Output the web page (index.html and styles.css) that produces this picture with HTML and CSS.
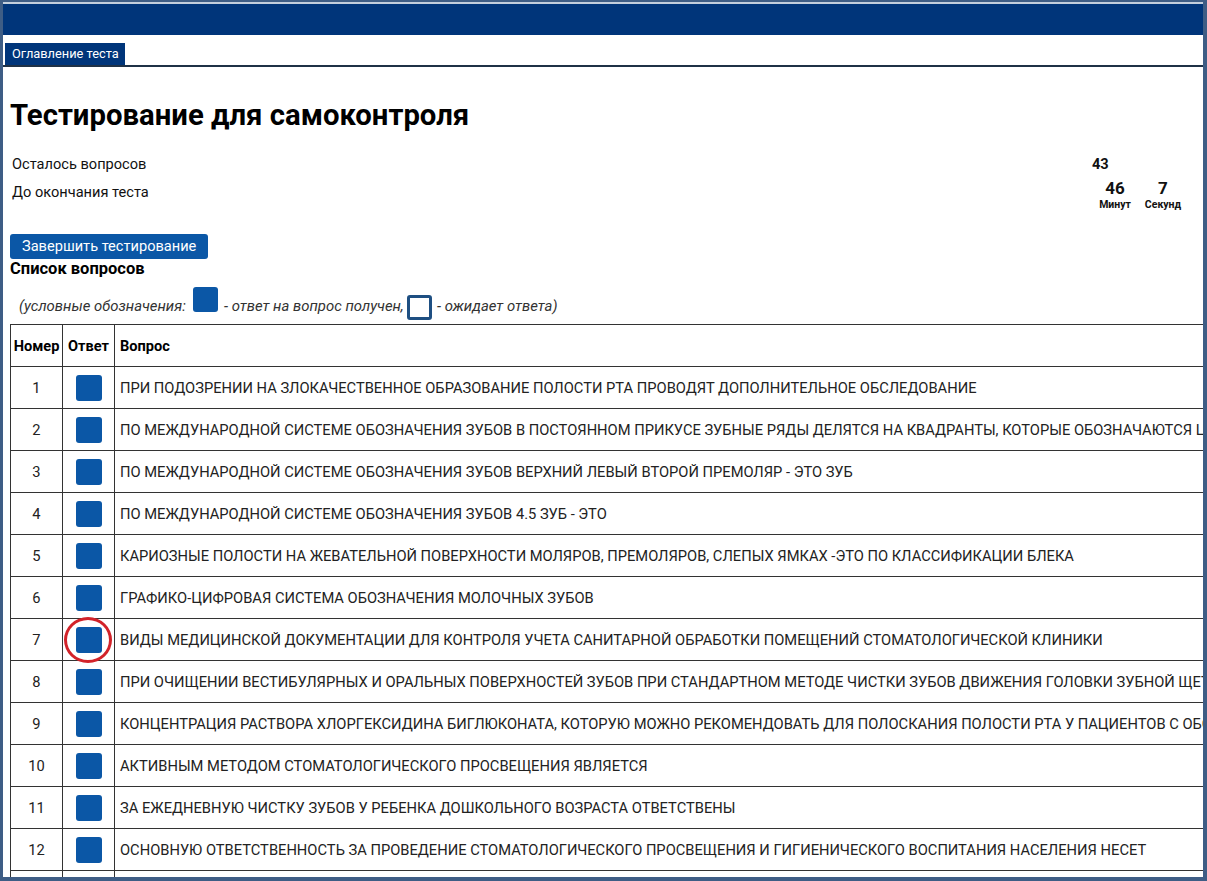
FILE: index.html
```html
<!DOCTYPE html>
<html lang="ru">
<head>
<meta charset="utf-8">
<title>Тестирование для самоконтроля</title>
<link rel="stylesheet" href="styles.css">
</head>
<body>
<div class="frame">
  <div class="topbar"></div>
  <div class="tabs">
    <span class="tab">Оглавление теста</span>
  </div>
  <div class="content">
    <h1 class="title">Тестирование для самоконтроля</h1>
    <div class="info">
      <div class="info-label">Осталось вопросов</div>
      <div class="info-value"><b>43</b></div>
      <div class="info-label">До окончания теста</div>
      <div class="timer">
        <div class="unit"><span class="num">46</span><span class="cap">Минут</span></div>
        <div class="unit"><span class="num">7</span><span class="cap">Секунд</span></div>
      </div>
    </div>
    <button class="finish">Завершить тестирование</button>
    <div class="list-title">Список вопросов</div>
    <div class="legend">(условные обозначения: <span class="sq sq-filled"></span> - ответ на вопрос получен, <span class="sq sq-empty"></span> - ожидает ответа)</div>
    <table class="questions">
      <thead>
        <tr><th class="c-num">Номер</th><th class="c-ans">Ответ</th><th class="c-q">Вопрос</th></tr>
      </thead>
      <tbody>
        <tr><td class="c-num">1</td><td class="c-ans"><span class="mark"></span></td><td class="c-q">ПРИ ПОДОЗРЕНИИ НА ЗЛОКАЧЕСТВЕННОЕ ОБРАЗОВАНИЕ ПОЛОСТИ РТА ПРОВОДЯТ ДОПОЛНИТЕЛЬНОЕ ОБСЛЕДОВАНИЕ</td></tr>
        <tr><td class="c-num">2</td><td class="c-ans"><span class="mark"></span></td><td class="c-q">ПО МЕЖДУНАРОДНОЙ СИСТЕМЕ ОБОЗНАЧЕНИЯ ЗУБОВ В ПОСТОЯННОМ ПРИКУСЕ ЗУБНЫЕ РЯДЫ ДЕЛЯТСЯ НА КВАДРАНТЫ, КОТОРЫЕ ОБОЗНАЧАЮТСЯ ЦИФРАМИ</td></tr>
        <tr><td class="c-num">3</td><td class="c-ans"><span class="mark"></span></td><td class="c-q">ПО МЕЖДУНАРОДНОЙ СИСТЕМЕ ОБОЗНАЧЕНИЯ ЗУБОВ ВЕРХНИЙ ЛЕВЫЙ ВТОРОЙ ПРЕМОЛЯР - ЭТО ЗУБ</td></tr>
        <tr><td class="c-num">4</td><td class="c-ans"><span class="mark"></span></td><td class="c-q">ПО МЕЖДУНАРОДНОЙ СИСТЕМЕ ОБОЗНАЧЕНИЯ ЗУБОВ 4.5 ЗУБ - ЭТО</td></tr>
        <tr><td class="c-num">5</td><td class="c-ans"><span class="mark"></span></td><td class="c-q">КАРИОЗНЫЕ ПОЛОСТИ НА ЖЕВАТЕЛЬНОЙ ПОВЕРХНОСТИ МОЛЯРОВ, ПРЕМОЛЯРОВ, СЛЕПЫХ ЯМКАХ -ЭТО ПО КЛАССИФИКАЦИИ БЛЕКА</td></tr>
        <tr><td class="c-num">6</td><td class="c-ans"><span class="mark"></span></td><td class="c-q">ГРАФИКО-ЦИФРОВАЯ СИСТЕМА ОБОЗНАЧЕНИЯ МОЛОЧНЫХ ЗУБОВ</td></tr>
        <tr><td class="c-num">7</td><td class="c-ans"><span class="mark-wrap"><span class="mark"></span><span class="ring"></span></span></td><td class="c-q">ВИДЫ МЕДИЦИНСКОЙ ДОКУМЕНТАЦИИ ДЛЯ КОНТРОЛЯ УЧЕТА САНИТАРНОЙ ОБРАБОТКИ ПОМЕЩЕНИЙ СТОМАТОЛОГИЧЕСКОЙ КЛИНИКИ</td></tr>
        <tr><td class="c-num">8</td><td class="c-ans"><span class="mark"></span></td><td class="c-q">ПРИ ОЧИЩЕНИИ ВЕСТИБУЛЯРНЫХ И ОРАЛЬНЫХ ПОВЕРХНОСТЕЙ ЗУБОВ ПРИ СТАНДАРТНОМ МЕТОДЕ ЧИСТКИ ЗУБОВ ДВИЖЕНИЯ ГОЛОВКИ ЗУБНОЙ ЩЕТКИ</td></tr>
        <tr><td class="c-num">9</td><td class="c-ans"><span class="mark"></span></td><td class="c-q">КОНЦЕНТРАЦИЯ РАСТВОРА ХЛОРГЕКСИДИНА БИГЛЮКОНАТА, КОТОРУЮ МОЖНО РЕКОМЕНДОВАТЬ ДЛЯ ПОЛОСКАНИЯ ПОЛОСТИ РТА У ПАЦИЕНТОВ С ОБОСТРЕНИЕМ</td></tr>
        <tr><td class="c-num">10</td><td class="c-ans"><span class="mark"></span></td><td class="c-q">АКТИВНЫМ МЕТОДОМ СТОМАТОЛОГИЧЕСКОГО ПРОСВЕЩЕНИЯ ЯВЛЯЕТСЯ</td></tr>
        <tr><td class="c-num">11</td><td class="c-ans"><span class="mark"></span></td><td class="c-q">ЗА ЕЖЕДНЕВНУЮ ЧИСТКУ ЗУБОВ У РЕБЕНКА ДОШКОЛЬНОГО ВОЗРАСТА ОТВЕТСТВЕНЫ</td></tr>
        <tr><td class="c-num">12</td><td class="c-ans"><span class="mark"></span></td><td class="c-q">ОСНОВНУЮ ОТВЕТСТВЕННОСТЬ ЗА ПРОВЕДЕНИЕ СТОМАТОЛОГИЧЕСКОГО ПРОСВЕЩЕНИЯ И ГИГИЕНИЧЕСКОГО ВОСПИТАНИЯ НАСЕЛЕНИЯ НЕСЕТ</td></tr>
        <tr class="row-last"><td class="c-num"></td><td class="c-ans"></td><td class="c-q"></td></tr>
      </tbody>
    </table>
  </div>
</div>
</body>
</html>
```
FILE: styles.css
```css
html, body {
  margin: 0;
  padding: 0;
  background: #ffffff;
}
body {
  font-family: Roboto, "Liberation Sans", Arial, sans-serif;
  color: #111;
}
.frame {
  box-sizing: border-box;
  width: 1207px;
  height: 881px;
  border-style: solid;
  border-color: #3e5d85;
  border-width: 2px 4px 4px 3px;
  overflow: hidden;
  background: #fff;
}
.topbar {
  height: 31px;
  border-top: 2px solid #c3cfdd;
  background: #00357a;
}
.tabs {
  padding: 8px 0 0 2px;
  border-bottom: 2px solid #1f3146;
  display: flex;
}
.tab {
  display: block;
  background: #00357a;
  color: #fff;
  font-size: 12.8px;
  line-height: 22px;
  height: 22px;
  padding: 0 6px 0 7px;
}
.content {
  padding: 0 0 0 7px;
}
.title {
  margin: 31px 0 0 0;
  font-size: 29.3px;
  line-height: 34px;
  font-weight: 700;
  color: #000;
}
.info {
  margin-top: 18px;
  display: grid;
  grid-template-columns: 1fr 111px;
  grid-template-rows: 28px 28px;
  font-size: 14.6px;
  color: #111;
}
.info-label {
  padding-left: 2px;
  line-height: 28px;
}
.info-label + .info-label {
  line-height: 26px;
}
.info-value {
  line-height: 28px;
}
.timer {
  display: flex;
  gap: 2px;
  margin-top: -1px;
}
.unit {
  width: 46px;
  display: flex;
  flex-direction: column;
  align-items: center;
}
.unit .num {
  font-weight: 700;
  font-size: 17px;
  line-height: 22px;
}
.unit .cap {
  font-weight: 700;
  font-size: 10.5px;
  line-height: 12px;
}
.finish {
  display: block;
  margin-top: 28px;
  height: 25px;
  padding: 0 12px;
  border: 0;
  border-radius: 3px;
  background: #0b57a6;
  color: #fff;
  font-family: inherit;
  font-size: 14.6px;
  line-height: 25px;
  cursor: pointer;
}
.list-title {
  font-weight: 700;
  font-size: 16.5px;
  line-height: 20px;
  color: #000;
}
.legend {
  margin-top: 8px;
  padding-left: 9px;
  font-style: italic;
  font-size: 14.9px;
  line-height: 24px;
  color: #333;
}
.sq {
  display: inline-block;
  box-sizing: border-box;
  width: 25px;
  height: 25px;
  border-radius: 3px;
}
.sq-filled {
  background: #0b57a6;
  vertical-align: -1px;
  margin: 0 2px 0 4px;
}
.sq-empty {
  border: 3px solid #1e4f82;
  vertical-align: -9px;
  margin: 0 1px 0 0;
}
.questions {
  margin-top: 4px;
  border-collapse: collapse;
  width: 1500px;
  white-space: nowrap;
  font-size: 14.7px;
  color: #222;
}
.questions th,
.questions td {
  border: 1px solid #333;
  height: 41px;
  padding: 0;
}
.questions th {
  font-weight: 700;
  font-size: 14.6px;
  color: #000;
}
.c-num {
  width: 51px;
  text-align: center;
}
.c-ans {
  width: 51px;
  text-align: center;
}
.questions .c-q {
  text-align: left;
  padding-left: 5px;
}
.mark {
  display: inline-block;
  width: 26px;
  height: 26px;
  border-radius: 3px;
  background: #0b57a6;
  vertical-align: middle;
}
.mark-wrap {
  position: relative;
  display: inline-block;
  vertical-align: middle;
}
.mark-wrap .mark {
  display: block;
}
.ring {
  position: absolute;
  left: -12px;
  top: -10px;
  width: 42px;
  height: 40px;
  border: 3px solid #d2232a;
  border-radius: 50%;
}
```
